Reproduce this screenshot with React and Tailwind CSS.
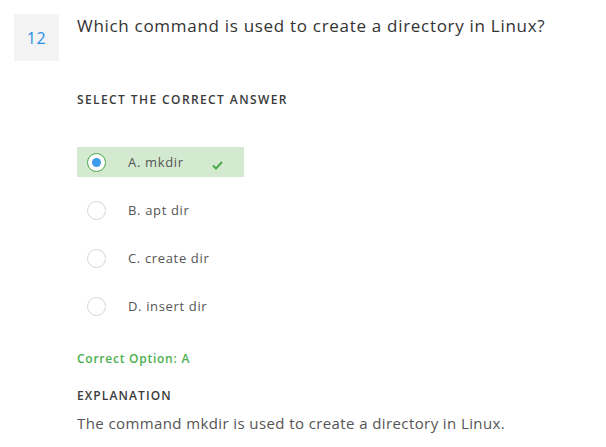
export default function App() {
  const options = [
    { key: "A", text: "mkdir", selected: true },
    { key: "B", text: "apt dir" },
    { key: "C", text: "create dir" },
    { key: "D", text: "insert dir" },
  ];
  return (
    <div className="w-[606px] h-[447px] bg-white text-[#333] overflow-hidden" style={{ fontFamily: '"Open Sans", sans-serif' }}>
      <div className="flex pt-[14px] pl-[14px]">
        <div className="w-[45px] h-[47px] bg-[#f3f3f3] flex items-center justify-center text-[#2a8ee8] text-[16px] tracking-[0.5px]">12</div>
        <div className="ml-[18px] -mt-[1px] text-[17px] text-[#333] leading-[26px] tracking-[0.7px]">Which command is used to create a directory in Linux?</div>
      </div>
      <div className="pl-[77px]">
        <div className="mt-[32px] text-[12px] font-semibold tracking-[1.4px] text-[#3a3a3a] leading-[14px]">SELECT THE CORRECT ANSWER</div>
        <div className="mt-[40px] flex flex-col gap-[18px]">
          {options.map((o) => (
            <div key={o.key} className={`flex items-center w-[167px] h-[30px] ${o.selected ? "bg-[#d3ead0]" : ""}`}>
              <div className={`ml-[10px] w-[19px] h-[19px] rounded-full border flex items-center justify-center bg-white ${o.selected ? "border-[#4aa84a]" : "border-[#d6d6d6]"}`}>
                {o.selected && <div className="w-[9px] h-[9px] rounded-full bg-[#3d9be9]" />}
              </div>
              <div className="ml-[22px] text-[13px] text-[#555] leading-[18px] tracking-[0.65px]">{o.key}. {o.text}</div>
              {o.selected && (
                <svg className="ml-[28px] mt-[7px]" width="11" height="9" viewBox="0 0 11 9">
                  <path d="M1 4.5 L4 7.5 L10 1" fill="none" stroke="#4aa84a" strokeWidth="2" />
                </svg>
              )}
            </div>
          ))}
        </div>
        <div className="mt-[30px] text-[12px] font-semibold text-[#4caf50] leading-[16px] tracking-[0.75px]">Correct Option: A</div>
        <div className="mt-[22px] text-[12px] font-semibold tracking-[1.1px] text-[#3a3a3a] leading-[14px]">EXPLANATION</div>
        <div className="mt-[10px] text-[15px] text-[#555] leading-[20px] tracking-[0.4px]">The command mkdir is used to create a directory in Linux.</div>
      </div>
    </div>
  );
}
